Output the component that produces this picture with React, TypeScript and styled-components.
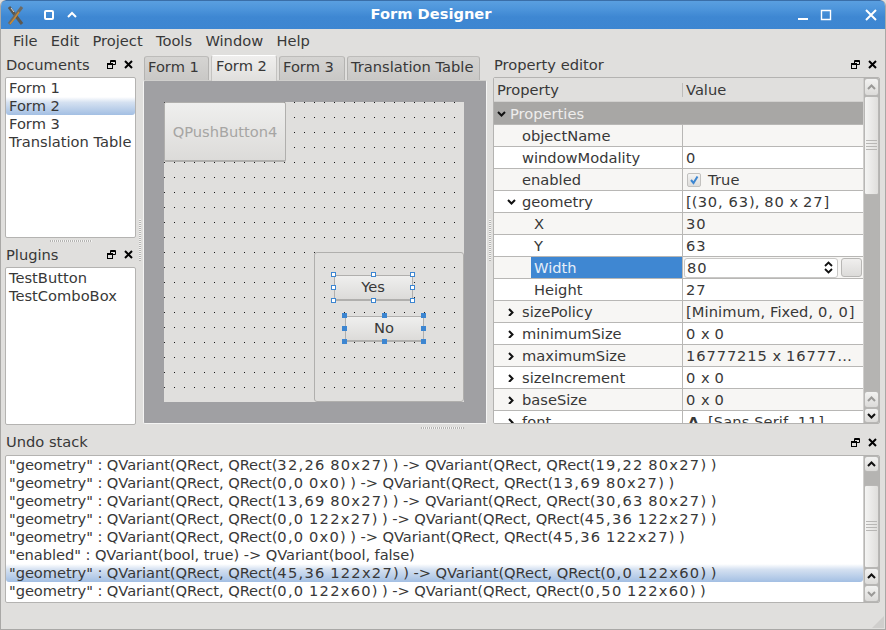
import React from "react";
import styled, { createGlobalStyle } from "styled-components";

const GlobalStyle = createGlobalStyle`
  html, body {
    margin: 0;
    padding: 0;
    background: #e0dfdd;
  }
  * {
    box-sizing: border-box;
  }
`;

const Window = styled.div`
  width: 886px;
  height: 630px;
  display: flex;
  flex-direction: column;
  overflow: hidden;
  background: #e0dfdd;
  color: #383838;
  font-family: "DejaVu Sans", sans-serif;
  font-size: 14.67px;
  border-radius: 6px 6px 0 0;
  border-left: 1px solid #a9a8a6;
  border-right: 1px solid #a9a8a6;
  border-bottom: 1px solid #a9a8a6;
`;

const TitleBar = styled.div`
  height: 29px;
  flex: none;
  margin: 0 -1px;
  display: flex;
  align-items: center;
  color: #fff;
  background: linear-gradient(#5a9fe0 0, #4d95db 8px, #3e87d2 16px, #3d86d1 100%);
  border-top: 1px solid #3a6ea8;
  border-radius: 6px 6px 0 0;
`;

const TitleLeft = styled.div`
  width: 200px;
  display: flex;
  align-items: center;
  padding-left: 7px;
`;

const TitleText = styled.div`
  flex: 1;
  text-align: center;
  font-weight: bold;
  font-size: 14.67px;
  padding-right: 24px;
  margin-top: -3px;
`;

const TitleRight = styled.div`
  width: 200px;
  display: flex;
  justify-content: flex-end;
  align-items: center;
  padding-right: 8px;
`;

const MenuBar = styled.div`
  height: 24px;
  flex: none;
  display: flex;
  align-items: center;
  gap: 13.3px;
  padding: 0 0 2px 12px;
`;

const Upper = styled.div`
  height: 372px;
  flex: none;
  display: flex;
  padding-left: 4px;
`;

const Column = styled.div<{ $width: number }>`
  width: ${(p) => p.$width}px;
  flex: none;
  display: flex;
  flex-direction: column;
`;

const DockTitle = styled.div`
  height: 24px;
  flex: none;
  display: flex;
  align-items: center;
  justify-content: space-between;
  padding: 0 3px 0 1px;
`;

const DockLabel = styled.span`
  margin-top: -2px;
`;

const DockButtons = styled.div`
  display: flex;
  align-items: center;
  gap: 8px;
  margin-top: -1px;
`;

const ListBox = styled.div<{ $height: number }>`
  height: ${(p) => p.$height}px;
  flex: none;
  background: #fff;
  border: 1px solid #b4b3b1;
  border-radius: 2px;
  padding-top: 1px;
  overflow: hidden;
`;

const ListRow = styled.div<{ $selected?: boolean }>`
  height: 18px;
  line-height: 18px;
  padding-left: 3px;
  white-space: nowrap;
  border-radius: 0 0 3px 3px;
  background: ${(p) =>
    p.$selected ? "linear-gradient(#ffffff 0, #d5e1f1 30%, #a3bfe3 100%)" : "transparent"};
`;

const Num = styled.span`
  letter-spacing: 0.9px;
`;

const HGrip = styled.div<{ $width: number }>`
  flex: 1;
  display: flex;
  justify-content: center;
  align-items: center;
  &::after {
    content: "";
    width: ${(p) => p.$width}px;
    height: 2px;
    background: repeating-linear-gradient(90deg, #b5b4b2 0 1px, #f4f4f3 1px 2px);
  }
`;

const VSplit = styled.div<{ $width: number; $gripTop: number }>`
  width: ${(p) => p.$width}px;
  flex: none;
  display: flex;
  justify-content: center;
  padding-top: ${(p) => p.$gripTop}px;
  &::after {
    content: "";
    width: 2px;
    height: 42px;
    background: repeating-linear-gradient(0deg, #b5b4b2 0 1px, #f4f4f3 1px 2px);
  }
`;

const LowerSplit = styled.div`
  height: 6px;
  flex: none;
  display: flex;
  justify-content: flex-end;
  align-items: center;
  padding-right: 421px;
  &::after {
    content: "";
    width: 43px;
    height: 2px;
    background: repeating-linear-gradient(90deg, #b5b4b2 0 1px, #f4f4f3 1px 2px);
  }
`;

const TabBar = styled.div`
  height: 27px;
  flex: none;
  display: flex;
  align-items: flex-end;
  gap: 2px;
  padding-left: 1px;
`;

const Tab = styled.div<{ $active?: boolean; $width: number }>`
  width: ${(p) => p.$width}px;
  height: ${(p) => (p.$active ? 26 : 24)}px;
  padding: ${(p) => (p.$active ? "0 0 6px 4px" : "0 0 4px 3px")};
  display: flex;
  align-items: center;
  white-space: nowrap;
  background: ${(p) =>
    p.$active ? "linear-gradient(#f0efee, #e0dfdd)" : "linear-gradient(#d5d4d2, #c9c8c6)"};
  border: 1px solid ${(p) => (p.$active ? "#c4c3c1" : "#b4b3b1")};
  border-top-color: ${(p) => (p.$active ? "#fff" : "#bdbcba")};
  border-bottom: none;
  border-radius: 3px 3px 0 0;
  margin-bottom: ${(p) => (p.$active ? -1 : 0)}px;
  position: relative;
`;

const TabPane = styled.div`
  height: 344px;
  flex: none;
  background: #a0a0a3;
  border: 1px solid #f4f4f3;
  border-top-color: #d0cfcd;
  border-radius: 2px;
  padding: 21px 0 0 20px;
`;

const FormCanvas = styled.div`
  position: relative;
  width: 300px;
  height: 300px;
  background-color: #e0dfdd;
  background-image: conic-gradient(from 270deg at 1px 1px, #1a1a1a 25%, transparent 0);
  background-size: 10px 15px;
`;

const PushButton = styled.div<{ $x: number; $y: number; $w: number; $h: number; $disabled?: boolean }>`
  position: absolute;
  left: ${(p) => p.$x}px;
  top: ${(p) => p.$y}px;
  width: ${(p) => p.$w}px;
  height: ${(p) => p.$h}px;
  padding-bottom: ${(p) => (p.$disabled ? 0 : 2)}px;
  padding-right: ${(p) => (p.$disabled ? 0 : 1)}px;
  display: flex;
  align-items: center;
  justify-content: center;
  color: ${(p) => (p.$disabled ? "#a6a5a3" : "#383838")};
  background: linear-gradient(#efefee, #dcdbd9);
  border: 1px solid #b0afad;
  border-bottom-width: 2px;
  border-radius: 2px;
`;

const GroupBox = styled.div`
  position: absolute;
  left: 150px;
  top: 150px;
  width: 150px;
  height: 150px;
  border: 1px solid #b0afad;
  border-radius: 3px;
  background-color: #e0dfdd;
  background-image: conic-gradient(from 270deg at 1px 1px, #1a1a1a 25%, transparent 0);
  background-size: 10px 15px;
  background-position: 9px 14px;
`;

const Handle = styled.div<{ $x: number; $y: number; $filled?: boolean }>`
  position: absolute;
  left: ${(p) => p.$x - 3}px;
  top: ${(p) => p.$y - 3}px;
  width: 5px;
  height: 5px;
  background: ${(p) => (p.$filled ? "#3d86d1" : "#fff")};
  border: 1px solid #3d86d1;
`;

const PropertyTable = styled.div`
  height: 347px;
  flex: none;
  display: flex;
  background: #fff;
  border: 1px solid #b4b3b1;
  border-radius: 2px;
  overflow: hidden;
`;

const TableMain = styled.div`
  flex: 1;
  min-width: 0;
  overflow: hidden;
`;

const TableHeader = styled.div`
  height: 24px;
  display: flex;
  align-items: center;
  background: #e0dfdd;
  border-bottom: 1px solid #d2d1cf;
`;

const HeaderCell = styled.div<{ $width?: number }>`
  width: ${(p) => (p.$width ? `${p.$width}px` : "auto")};
  padding-left: 3px;
  flex: none;
`;

const HeaderDivider = styled.div`
  width: 1px;
  height: 14px;
  background: #bdbcba;
  margin-left: -1px;
`;

const Band = styled.div`
  height: 23px;
  display: flex;
  align-items: center;
  color: #eeedec;
  background: #a8a7a5;
  border-bottom: 1px solid #b8b7b5;
  padding-left: 3px;
  gap: 4px;
`;

const PropRow = styled.div<{ $alt: boolean }>`
  height: 22px;
  display: flex;
  background: ${(p) => (p.$alt ? "#f7f6f4" : "#fff")};
  border-bottom: 1px solid #b8b7b5;
`;

const NameCell = styled.div`
  width: 189px;
  flex: none;
  display: flex;
  align-items: center;
  white-space: nowrap;
  border-right: 1px solid #b8b7b5;
`;

const Expander = styled.div`
  width: 28px;
  flex: none;
  display: flex;
  justify-content: flex-end;
  padding-right: 6px;
`;

const NameLabel = styled.div<{ $selected?: boolean; $sub?: boolean }>`
  flex: 1;
  align-self: stretch;
  display: flex;
  align-items: center;
  margin-left: ${(p) => (p.$sub ? 37 : 0)}px;
  padding-left: ${(p) => (p.$sub ? 3 : 0)}px;
  color: ${(p) => (p.$selected ? "#e6eef8" : "inherit")};
  background: ${(p) => (p.$selected ? "#3f87d2" : "transparent")};
`;

const ValueCell = styled.div`
  flex: 1;
  display: flex;
  align-items: center;
  gap: 6px;
  padding-left: 3px;
  white-space: nowrap;
  overflow: hidden;
`;

const ValueText = styled.span`
  letter-spacing: 0.1px;
`;

const CheckBox = styled.div`
  width: 14px;
  height: 14px;
  flex: none;
  margin-left: 1px;
  margin-right: 1px;
  display: flex;
  align-items: center;
  justify-content: center;
  background: linear-gradient(#f4f4f3, #dddcda);
  border: 1px solid #c2c1bf;
  border-radius: 2px;
`;

const SpinEditor = styled.div`
  flex: 1;
  display: flex;
  align-items: center;
  gap: 3px;
  height: 22px;
  padding: 0 0 1px 1px;
`;

const SpinBox = styled.div`
  width: 154px;
  height: 20px;
  flex: none;
  display: flex;
  align-items: center;
  justify-content: space-between;
  padding: 0 4px 0 2px;
  background: #fff;
  border: 1px solid #c9c8c6;
  border-radius: 3px;
`;

const ResetButton = styled.div`
  width: 21px;
  height: 19px;
  flex: none;
  background: linear-gradient(#f0efee, #dcdbd9);
  border: 1px solid #b8b7b5;
  border-radius: 3px;
`;

const FontGlyph = styled.span`
  font-weight: bold;
  width: 15px;
  text-align: center;
  margin-right: 1px;
`;

const ScrollBar = styled.div`
  width: 16px;
  flex: none;
  display: flex;
  flex-direction: column;
  background: #b5b4b2;
  border-left: 1px solid #d0cfcd;
`;

const ScrollButton = styled.div<{ $height: number }>`
  height: ${(p) => p.$height}px;
  flex: none;
  display: flex;
  align-items: center;
  justify-content: center;
  background: linear-gradient(#f2f2f1, #dcdbd9);
  border: 1px solid #b8b7b5;
  border-radius: 3px;
`;

const ScrollThumb = styled.div<{ $height: number }>`
  height: ${(p) => p.$height}px;
  flex: none;
  display: flex;
  align-items: center;
  justify-content: center;
  background: linear-gradient(90deg, #f4f4f3, #dfdedc);
  border: 1px solid #b8b7b5;
  border-radius: 2px;
  &::after {
    content: "";
    width: 11px;
    height: 11px;
    background: repeating-linear-gradient(#b8b7b5 0 1px, transparent 1px 3px);
  }
`;

const ScrollTrough = styled.div<{ $height?: number }>`
  flex: ${(p) => (p.$height ? `0 0 ${p.$height}px` : 1)};
`;

const UndoDock = styled.div`
  padding-left: 4px;
  padding-right: 5px;
  flex: none;
  ${DockLabel} {
    margin-top: -4px;
  }
`;

const UndoBox = styled.div`
  height: 148px;
  display: flex;
  background: #fff;
  border: 1px solid #b4b3b1;
  border-radius: 2px;
  overflow: hidden;
`;

const UndoRows = styled.div`
  flex: 1;
  min-width: 0;
  letter-spacing: -0.07px;
  ${Num} {
    letter-spacing: 1.25px;
  }
`;

const StatusBar = styled.div`
  flex: 1;
  display: flex;
  justify-content: flex-end;
  align-items: flex-end;
  padding: 0 1px 1px 0;
`;

const Svg = styled.svg`
  display: block;
  flex: none;
`;

const FloatIcon = () => (
  <Svg width="9" height="9" viewBox="0 0 9 9" fill="none" stroke="#000">
    <path d="M3.5 3V.5h5v4H6" />
    <path d="M3 1.5h5" />
    <rect x=".5" y="3.5" width="5" height="5" />
    <path d="M1 4.5h4" />
  </Svg>
);

const CloseIcon = () => (
  <Svg width="9" height="9" viewBox="0 0 9 9" stroke="#000" strokeWidth="2">
    <path d="M1 1l7 7M8 1l-7 7" />
  </Svg>
);

const DockHeader = ({ label }: { label: string }) => (
  <DockTitle>
    <DockLabel>{label}</DockLabel>
    <DockButtons>
      <FloatIcon />
      <CloseIcon />
    </DockButtons>
  </DockTitle>
);

const Chevron = ({ dir, color = "#111" }: { dir: "up" | "down" | "right"; color?: string }) => {
  const d = dir === "up" ? "M1 5l3.5-3.5L8 5" : dir === "down" ? "M1 2l3.5 3.5L8 2" : "M2 1l3.5 3.5L2 8";
  return (
    <Svg width="9" height="9" viewBox="0 0 9 7" fill="none" stroke={color} strokeWidth="2">
      <path d={d} />
    </Svg>
  );
};

const XLogo = () => (
  <Svg width="17" height="19" viewBox="0 0 17 19" fill="none" strokeWidth="3">
    <path d="M2 1l13 17" stroke="#5c5850" />
    <path d="M15 1L2 18" stroke="#6e6a62" />
    <path d="M12 6l-5 7-4 5" stroke="#c98a35" strokeWidth="1.4" />
    <path d="M4 2l3 4" stroke="#d8d6d2" strokeWidth="1" />
  </Svg>
);

const WinIcon = ({ kind, gap }: { kind: string; gap?: number }) => (
  <Svg
    width="14"
    height="14"
    viewBox="0 0 14 14"
    fill="none"
    stroke="#fff"
    strokeWidth="2"
    style={gap ? { marginLeft: gap } : undefined}
  >
    {kind === "pin" && <rect x="3" y="3" width="8" height="8" rx="1" />}
    {kind === "up" && <path d="M3 9l4-4 4 4" />}
    {kind === "min" && <path d="M2 11h10" />}
    {kind === "max" && <path d="M2.5 2.5h9v9h-9z" strokeWidth="1.4" />}
    {kind === "close" && <path d="M2 2l10 10M12 2L2 12" />}
  </Svg>
);

const GripIcon = () => (
  <Svg width="12" height="12" viewBox="0 0 12 12">
    <path d="M12 0v12H0z" fill="#cfcecc" />
  </Svg>
);

// digits are hinted wider than the rest of the font in this theme
const withNums = (text: string) =>
  text.split(/(\d[\d,x]*)/).map((part, i) => (i % 2 ? <Num key={i}>{part}</Num> : part));

type Prop = {
  name: string;
  value?: string;
  sub?: boolean;
  arrow?: "down" | "right";
  kind?: "check" | "spin" | "font";
};

const properties: Prop[] = [
  { name: "objectName", value: "" },
  { name: "windowModality", value: "0" },
  { name: "enabled", value: "True", kind: "check" },
  { name: "geometry", value: "[(30, 63), 80 x 27]", arrow: "down" },
  { name: "X", value: "30", sub: true },
  { name: "Y", value: "63", sub: true },
  { name: "Width", value: "80", sub: true, kind: "spin" },
  { name: "Height", value: "27", sub: true },
  { name: "sizePolicy", value: "[Minimum, Fixed, 0, 0]", arrow: "right" },
  { name: "minimumSize", value: "0 x 0", arrow: "right" },
  { name: "maximumSize", value: "16777215 x 16777…", arrow: "right" },
  { name: "sizeIncrement", value: "0 x 0", arrow: "right" },
  { name: "baseSize", value: "0 x 0", arrow: "right" },
  { name: "font", value: "[Sans Serif, 11]", arrow: "right", kind: "font" },
];

const undoItems = [
  '"geometry" : QVariant(QRect, QRect(32,26 80x27) ) -> QVariant(QRect, QRect(19,22 80x27) )',
  '"geometry" : QVariant(QRect, QRect(0,0 0x0) ) -> QVariant(QRect, QRect(13,69 80x27) )',
  '"geometry" : QVariant(QRect, QRect(13,69 80x27) ) -> QVariant(QRect, QRect(30,63 80x27) )',
  '"geometry" : QVariant(QRect, QRect(0,0 122x27) ) -> QVariant(QRect, QRect(45,36 122x27) )',
  '"geometry" : QVariant(QRect, QRect(0,0 0x0) ) -> QVariant(QRect, QRect(45,36 122x27) )',
  '"enabled" : QVariant(bool, true) -> QVariant(bool, false)',
  '"geometry" : QVariant(QRect, QRect(45,36 122x27) ) -> QVariant(QRect, QRect(0,0 122x60) )',
  '"geometry" : QVariant(QRect, QRect(0,0 122x60) ) -> QVariant(QRect, QRect(0,50 122x60) )',
];

const menus = ["File", "Edit", "Project", "Tools", "Window", "Help"];
const tabs = [
  { label: "Form 1", width: 65 },
  { label: "Form 2", width: 66, active: true },
  { label: "Form 3", width: 66 },
  { label: "Translation Table", width: 133 },
];

const selectionHandles = (x: number, y: number, w: number, h: number, filled: boolean) =>
  [
    [x, y],
    [x + w / 2, y],
    [x + w, y],
    [x, y + h / 2],
    [x + w, y + h / 2],
    [x, y + h],
    [x + w / 2, y + h],
    [x + w, y + h],
  ].map(([hx, hy]) => <Handle key={`${hx}-${hy}`} $x={Math.round(hx)} $y={Math.round(hy)} $filled={filled} />);

const PropertyValue = ({ prop }: { prop: Prop }) => {
  if (prop.kind === "spin") {
    return (
      <SpinEditor>
        <SpinBox>
          <span>{withNums(prop.value ?? "")}</span>
          <Svg width="9" height="13" viewBox="0 0 9 13" fill="none" stroke="#111" strokeWidth="1.8">
            <path d="M1 5l3.5-3.5L8 5M1 8l3.5 3.5L8 8" />
          </Svg>
        </SpinBox>
        <ResetButton />
      </SpinEditor>
    );
  }
  return (
    <ValueCell>
      {prop.kind === "check" && (
        <CheckBox>
          <Svg width="10" height="10" viewBox="0 0 10 10" fill="none" stroke="#3d86d1" strokeWidth="2">
            <path d="M2 5l2.5 3L8.5 1.5" />
          </Svg>
        </CheckBox>
      )}
      {prop.kind === "font" && <FontGlyph>A</FontGlyph>}
      <ValueText>{withNums(prop.value ?? "")}</ValueText>
    </ValueCell>
  );
};

export default function App() {
  return (
    <Window>
      <GlobalStyle />
      <TitleBar>
        <TitleLeft>
          <XLogo />
          <WinIcon kind="pin" gap={18} />
          <WinIcon kind="up" gap={9} />
        </TitleLeft>
        <TitleText>Form Designer</TitleText>
        <TitleRight>
          <WinIcon kind="min" />
          <WinIcon kind="max" gap={9} />
          <WinIcon kind="close" gap={31} />
        </TitleRight>
      </TitleBar>

      <MenuBar>
        {menus.map((m) => (
          <span key={m}>{m}</span>
        ))}
      </MenuBar>

      <Upper>
        <Column $width={131}>
          <DockHeader label="Documents" />
          <ListBox $height={161}>
            <ListRow>{withNums("Form 1")}</ListRow>
            <ListRow $selected>{withNums("Form 2")}</ListRow>
            <ListRow>{withNums("Form 3")}</ListRow>
            <ListRow>Translation Table</ListRow>
          </ListBox>
          <HGrip $width={42} />
          <DockHeader label="Plugins" />
          <ListBox $height={158}>
            <ListRow>TestButton</ListRow>
            <ListRow>TestComboBox</ListRow>
          </ListBox>
        </Column>

        <VSplit $width={7} $gripTop={166} />

        <Column $width={344}>
          <TabBar>
            {tabs.map((t) => (
              <Tab key={t.label} $active={t.active} $width={t.width}>
                <span>{withNums(t.label)}</span>
              </Tab>
            ))}
          </TabBar>
          <TabPane>
            <FormCanvas>
              <PushButton $x={0} $y={0} $w={122} $h={60} $disabled>
                QPushButton4
              </PushButton>
              <GroupBox />
              <PushButton $x={170} $y={173} $w={79} $h={26}>
                Yes
              </PushButton>
              <PushButton $x={181} $y={214} $w={79} $h={26}>
                No
              </PushButton>
              {selectionHandles(170, 173, 79, 26, false)}
              {selectionHandles(181, 214, 79, 26, true)}
            </FormCanvas>
          </TabPane>
        </Column>

        <VSplit $width={6} $gripTop={166} />

        <Column $width={387}>
          <DockHeader label="Property editor" />
          <PropertyTable>
            <TableMain>
              <TableHeader>
                <HeaderCell $width={189}>Property</HeaderCell>
                <HeaderDivider />
                <HeaderCell>Value</HeaderCell>
              </TableHeader>
              <Band>
                <Chevron dir="down" />
                Properties
              </Band>
              {properties.map((prop, i) => (
                <PropRow key={prop.name} $alt={i % 2 === 0}>
                  <NameCell>
                    {prop.sub ? (
                      <NameLabel $sub $selected={prop.kind === "spin"}>
                        {prop.name}
                      </NameLabel>
                    ) : (
                      <>
                        <Expander>{prop.arrow && <Chevron dir={prop.arrow} />}</Expander>
                        <NameLabel>{prop.name}</NameLabel>
                      </>
                    )}
                  </NameCell>
                  <PropertyValue prop={prop} />
                </PropRow>
              ))}
            </TableMain>
            <ScrollBar>
              <ScrollButton $height={18}>
                <Chevron dir="up" color="#9a9997" />
              </ScrollButton>
              <ScrollThumb $height={99} />
              <ScrollTrough />
              <ScrollButton $height={17}>
                <Chevron dir="up" color="#9a9997" />
              </ScrollButton>
              <ScrollButton $height={15}>
                <Chevron dir="down" />
              </ScrollButton>
            </ScrollBar>
          </PropertyTable>
        </Column>
      </Upper>

      <LowerSplit />

      <UndoDock>
        <DockHeader label="Undo stack" />
        <UndoBox>
          <UndoRows>
            {undoItems.map((item, i) => (
              <ListRow key={item} $selected={i === 6}>
                {withNums(item)}
              </ListRow>
            ))}
          </UndoRows>
          <ScrollBar>
            <ScrollButton $height={16}>
              <Chevron dir="up" />
            </ScrollButton>
            <ScrollTrough $height={13} />
            <ScrollThumb $height={83} />
            <ScrollButton $height={17}>
              <Chevron dir="up" />
            </ScrollButton>
            <ScrollButton $height={17}>
              <Chevron dir="down" color="#9a9997" />
            </ScrollButton>
          </ScrollBar>
        </UndoBox>
      </UndoDock>

      <StatusBar>
        <GripIcon />
      </StatusBar>
    </Window>
  );
}
